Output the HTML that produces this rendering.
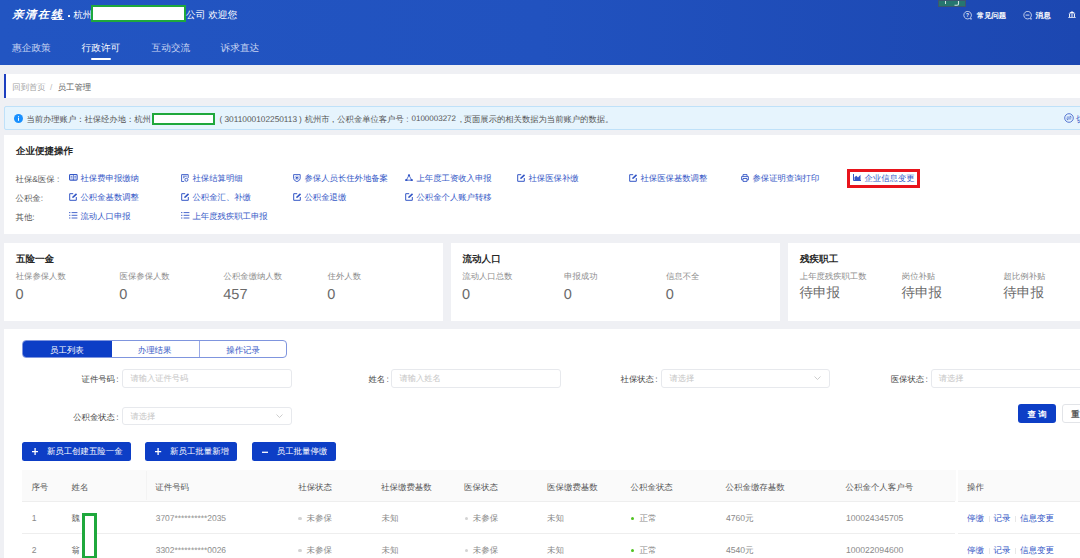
<!DOCTYPE html>
<html><head><meta charset="utf-8">
<style>
*{margin:0;padding:0;box-sizing:border-box}
html,body{width:1080px;height:558px;overflow:hidden;background:#eff0f4;font-family:"Liberation Sans",sans-serif;color:#333;position:relative}
.a{position:absolute;white-space:nowrap;line-height:1;text-rendering:geometricPrecision}
</style></head><body>
<div style="position:absolute;left:0px;top:0px;width:1080px;height:65px;background:linear-gradient(90deg,#2255c2 0%,#2152bf 50%,#1c47b1 100%)"></div>
<div class="a" style="left:12.3px;top:9.6px;font-size:11.2px;color:#fff;letter-spacing:1.6px;font-style:italic;font-weight:bold;transform:scaleY(0.97);transform-origin:0 0">亲清在线</div>
<div style="position:absolute;left:52px;top:18.6px;width:11.5px;height:1px;background:#fff;opacity:0.9"></div>
<div style="position:absolute;left:67.6px;top:15.2px;width:2px;height:2px;background:#fff;border-radius:0.5px"></div>
<div class="a" style="left:73.5px;top:10.6px;font-size:9.3px;color:#fff;">杭州</div>
<div style="position:absolute;left:91px;top:4.5px;width:95px;height:17.5px;border:2px solid #1fa83c;background:#fff;box-sizing:border-box"></div>
<div class="a" style="left:186.1px;top:11px;font-size:9.7px;color:#fff;">公司 欢迎您</div>
<div style="position:absolute;left:938.4px;top:0px;width:27.5px;height:6.8px;background:#26766f;border:1px solid #3d5570;box-sizing:border-box"></div>
<div style="position:absolute;left:944.5px;top:1px;width:1.2px;height:2.5px;background:#cfe3e0"></div>
<svg style="position:absolute;left:953px;top:0.5px" width="7" height="5" viewBox="0 0 7 5"><path d="M5.5 0 V3 Q5.5 4.2 4 4.2 H1.5" fill="none" stroke="#cfe3e0" stroke-width="1.1"/></svg>
<svg style="position:absolute;left:962.5px;top:10.8px" width="10" height="9" viewBox="0 0 10 9"><path d="M7.6 6.5 A3.8 3.8 0 1 0 6.4 7.5 L8.4 8.2 Z" fill="none" stroke="#fff" stroke-width="0.7" stroke-linejoin="round"/><text x="4.5" y="6" font-size="4.8" fill="#fff" text-anchor="middle" font-family="Liberation Sans" font-weight="bold">?</text></svg>
<div class="a" style="left:976.8px;top:12px;font-size:7.35px;color:#fff;font-weight:bold">常见问题</div>
<svg style="position:absolute;left:1022.5px;top:10.8px" width="10" height="9" viewBox="0 0 10 9"><path d="M7.6 6.5 A3.8 3.8 0 1 0 6.4 7.5 L8.4 8.2 Z" fill="none" stroke="#fff" stroke-width="0.7" stroke-linejoin="round"/><line x1="2.6" y1="4.1" x2="6.4" y2="4.1" stroke="#fff" stroke-width="0.8"/></svg>
<div class="a" style="left:1035.6px;top:12px;font-size:7.6px;color:#fff;font-weight:bold">消息</div>
<svg style="position:absolute;left:1067.8px;top:10.5px" width="8" height="7.2" viewBox="0 0 8 7.2"><path d="M0.3 2.4 L4 0.2 L7.7 2.4 Z M1.1 3 h1 v3 h-1z M3.5 3 h1 v3 h-1z M5.9 3 h1 v3 h-1z M0.3 6.3 h7.4 v0.9 h-7.4z" fill="#fff"/></svg>
<div class="a" style="left:12.0px;top:44px;font-size:9.7px;color:#c9d5f2;">惠企政策</div>
<div class="a" style="left:81.5px;top:44px;font-size:9.7px;color:#fff;">行政许可</div>
<div class="a" style="left:151.5px;top:44px;font-size:9.7px;color:#c9d5f2;">互动交流</div>
<div class="a" style="left:220.5px;top:44px;font-size:9.7px;color:#c9d5f2;">诉求直达</div>
<div style="position:absolute;left:91px;top:58px;width:20px;height:2px;background:#fff;border-radius:1px"></div>
<div style="position:absolute;left:4px;top:74px;width:1120px;height:24px;background:#fff;border-left:2.5px solid #1d3fc0;box-sizing:border-box"></div>
<div class="a" style="left:12.3px;top:82.7px;font-size:8.35px;color:#a3a3a3;">回到首页</div>
<div class="a" style="left:50.0px;top:82.7px;font-size:8.35px;color:#bbb;">/</div>
<div class="a" style="left:57.7px;top:82.7px;font-size:8.35px;color:#5c5c5c;">员工管理</div>
<div style="position:absolute;left:4px;top:106px;width:1120px;height:24px;background:#e6f4fd;border:1px solid #bfe1f9;border-radius:2px;box-sizing:border-box"></div>
<svg style="position:absolute;left:14px;top:114px" width="9" height="9" viewBox="0 0 9 9"><circle cx="4.5" cy="4.5" r="4.5" fill="#1890ff"/><rect x="4" y="3.8" width="1" height="3" fill="#fff"/><rect x="4" y="2.2" width="1" height="1" fill="#fff"/></svg>
<div class="a" style="left:26.4px;top:115.2px;font-size:8.3px;color:#555;">当前办理账户：社保经办地：杭州</div>
<div style="position:absolute;left:151.5px;top:112.5px;width:63.5px;height:12px;border:2px solid #1fa83c;background:#fff;box-sizing:border-box"></div>
<div class="a" style="left:219.5px;top:114.5px;font-size:8.3px;color:#555;">(</div>
<div class="a" style="left:224.5px;top:114.5px;font-size:8.3px;color:#555;">3011000102250113</div>
<div class="a" style="left:299.1px;top:114.5px;font-size:8.3px;color:#555;">)</div>
<div class="a" style="left:304.7px;top:115.2px;font-size:8.3px;color:#555;">杭州市</div>
<div class="a" style="left:332.0px;top:114.5px;font-size:8.3px;color:#555;">,</div>
<div class="a" style="left:337.3px;top:115.2px;font-size:8.3px;color:#555;">公积金单位客户号</div>
<div class="a" style="left:406.3px;top:114.5px;font-size:8.3px;color:#555;">:</div>
<div class="a" style="left:411.5px;top:114.5px;font-size:8.0px;color:#555;">0100003272</div>
<div class="a" style="left:459.8px;top:114.5px;font-size:8.3px;color:#555;">,</div>
<div class="a" style="left:463.7px;top:115.2px;font-size:8.32px;color:#555;">页面展示的相关数据为当前账户的数据。</div>
<svg style="position:absolute;left:1064.3px;top:113.3px" width="10" height="10" viewBox="0 0 10 10"><circle cx="5" cy="5" r="4.3" fill="none" stroke="#3457c6" stroke-width="0.8"/><path d="M2.7 4.1 h4.6 l-1.4 -1.3 M7.3 5.9 h-4.6 l1.4 1.3" fill="none" stroke="#3457c6" stroke-width="0.7"/></svg>
<div class="a" style="left:1076.1px;top:115.2px;font-size:8.3px;color:#3457c6;">切</div>
<div style="position:absolute;left:4px;top:135px;width:1120px;height:99px;background:#fff"></div>
<div class="a" style="left:15.9px;top:147px;font-size:9.5px;color:#262626;font-weight:bold">企业便捷操作</div>
<div class="a" style="left:15.5px;top:175px;font-size:8.4px;color:#5a5a5a;">社保&amp;医保</div>
<div class="a" style="left:57.0px;top:175px;font-size:8.4px;color:#5a5a5a;">:</div>
<div class="a" style="left:15.5px;top:194px;font-size:8.4px;color:#5a5a5a;">公积金:</div>
<div class="a" style="left:15.5px;top:213px;font-size:8.4px;color:#5a5a5a;">其他:</div>
<svg style="position:absolute;left:69px;top:174.2px" width="9" height="7" viewBox="0 0 9 7"><rect x="0.55" y="0.55" width="7.6" height="5.6" rx="0.9" fill="none" stroke="#3457c6" stroke-width="1.1"/><line x1="4.35" y1="0.5" x2="4.35" y2="6.2" stroke="#3457c6" stroke-width="0.8"/><path d="M1.6 2.3 h1.8 M1.6 3.9 h1.8 M5.3 2.3 h1.8 M5.3 3.9 h1.8" stroke="#3457c6" stroke-width="0.8"/></svg>
<div class="a" style="left:80.5px;top:174.1px;font-size:8.35px;color:#3457c6;">社保费申报缴纳</div>
<svg style="position:absolute;left:181px;top:173.6px" width="8" height="8.2" viewBox="0 0 8 8.2"><path d="M3.2 7.6 H0.6 V0.6 H7.2 V4" fill="none" stroke="#3457c6" stroke-width="0.9"/><path d="M2 2.2 h3.8 M2 3.7 h1.6" stroke="#3457c6" stroke-width="0.8"/><circle cx="5.4" cy="5.8" r="1.5" fill="none" stroke="#3457c6" stroke-width="0.9"/></svg>
<div class="a" style="left:192.5px;top:174.1px;font-size:8.35px;color:#3457c6;">社保结算明细</div>
<svg style="position:absolute;left:293px;top:173.5px" width="8" height="8.2" viewBox="0 0 8 8.2"><path d="M0.6 0.6 H7.2 V4.6 Q7.2 6.4 3.9 7.7 Q0.6 6.4 0.6 4.6 Z" fill="none" stroke="#3457c6" stroke-width="0.9" stroke-linejoin="round"/><circle cx="3.9" cy="3.8" r="1.9" fill="none" stroke="#3457c6" stroke-width="0.6" opacity="0.6"/><circle cx="3.9" cy="3.8" r="1.1" fill="#3457c6"/></svg>
<div class="a" style="left:304.5px;top:174.1px;font-size:8.35px;color:#3457c6;">参保人员长住外地备案</div>
<svg style="position:absolute;left:405px;top:173.89999999999998px" width="8" height="7.4" viewBox="0 0 8 7.4"><path d="M4 1.2 L1.3 6.2 H6.7 Z" fill="none" stroke="#3457c6" stroke-width="0.8"/><circle cx="4" cy="1.3" r="1.15" fill="#3457c6"/><circle cx="1.3" cy="6.1" r="1.2" fill="#3457c6"/><circle cx="6.7" cy="6.1" r="1.2" fill="#3457c6"/></svg>
<div class="a" style="left:416.5px;top:174.1px;font-size:8.35px;color:#3457c6;">上年度工资收入申报</div>
<svg style="position:absolute;left:517px;top:174.2px" width="9" height="8" viewBox="0 0 9 8"><path d="M4.2 0.7 H0.7 V7.3 H7.3 V4" fill="none" stroke="#3457c6" stroke-width="1"/><path d="M3.2 5 L3.5 3.6 L7 0.3 L8.1 1.4 L4.6 4.8 Z" fill="#3457c6"/></svg>
<div class="a" style="left:528.5px;top:174.1px;font-size:8.35px;color:#3457c6;">社保医保补缴</div>
<svg style="position:absolute;left:629px;top:174.2px" width="9" height="8" viewBox="0 0 9 8"><path d="M4.2 0.7 H0.7 V7.3 H7.3 V4" fill="none" stroke="#3457c6" stroke-width="1"/><path d="M3.2 5 L3.5 3.6 L7 0.3 L8.1 1.4 L4.6 4.8 Z" fill="#3457c6"/></svg>
<div class="a" style="left:640.5px;top:174.1px;font-size:8.35px;color:#3457c6;">社保医保基数调整</div>
<svg style="position:absolute;left:741px;top:173.7px" width="8" height="8" viewBox="0 0 8 8"><path d="M2 2.4 V0.6 H6 V2.4" fill="none" stroke="#3457c6" stroke-width="0.9"/><path d="M2 5.9 H0.6 V2.6 H7.4 V5.9 H6" fill="none" stroke="#3457c6" stroke-width="0.9" stroke-linejoin="round"/><path d="M2 4.5 H6 V7.4 H2 Z" fill="none" stroke="#3457c6" stroke-width="0.9"/></svg>
<div class="a" style="left:752.5px;top:174.1px;font-size:8.35px;color:#3457c6;">参保证明查询打印</div>
<svg style="position:absolute;left:853px;top:174.2px" width="8" height="7" viewBox="0 0 8 7"><path d="M0.5 0 V6.5 H8" fill="none" stroke="#3457c6" stroke-width="1"/><path d="M1.5 6 V3.2 L3.3 1.8 L5 3.6 L7.5 0.8 V6 Z" fill="#3457c6"/></svg>
<div class="a" style="left:864.5px;top:174.1px;font-size:8.35px;color:#3457c6;">企业信息变更</div>
<svg style="position:absolute;left:69px;top:193.2px" width="9" height="8" viewBox="0 0 9 8"><path d="M4.2 0.7 H0.7 V7.3 H7.3 V4" fill="none" stroke="#3457c6" stroke-width="1"/><path d="M3.2 5 L3.5 3.6 L7 0.3 L8.1 1.4 L4.6 4.8 Z" fill="#3457c6"/></svg>
<div class="a" style="left:80.5px;top:193.1px;font-size:8.35px;color:#3457c6;">公积金基数调整</div>
<svg style="position:absolute;left:181px;top:193.2px" width="9" height="8" viewBox="0 0 9 8"><path d="M4.2 0.7 H0.7 V7.3 H7.3 V4" fill="none" stroke="#3457c6" stroke-width="1"/><path d="M3.2 5 L3.5 3.6 L7 0.3 L8.1 1.4 L4.6 4.8 Z" fill="#3457c6"/></svg>
<div class="a" style="left:192.5px;top:193.1px;font-size:8.35px;color:#3457c6;">公积金汇、补缴</div>
<svg style="position:absolute;left:293px;top:193.2px" width="9" height="8" viewBox="0 0 9 8"><path d="M4.2 0.7 H0.7 V7.3 H7.3 V4" fill="none" stroke="#3457c6" stroke-width="1"/><path d="M3.2 5 L3.5 3.6 L7 0.3 L8.1 1.4 L4.6 4.8 Z" fill="#3457c6"/></svg>
<div class="a" style="left:304.5px;top:193.1px;font-size:8.35px;color:#3457c6;">公积金退缴</div>
<svg style="position:absolute;left:405px;top:193.2px" width="9" height="8" viewBox="0 0 9 8"><path d="M4.2 0.7 H0.7 V7.3 H7.3 V4" fill="none" stroke="#3457c6" stroke-width="1"/><path d="M3.2 5 L3.5 3.6 L7 0.3 L8.1 1.4 L4.6 4.8 Z" fill="#3457c6"/></svg>
<div class="a" style="left:416.5px;top:193.1px;font-size:8.35px;color:#3457c6;">公积金个人账户转移</div>
<svg style="position:absolute;left:69px;top:212.2px" width="9" height="7" viewBox="0 0 9 7"><path d="M0 0.6 h1.4 M2.6 0.6 h5.8 M0 3.3 h1.4 M2.6 3.3 h5.8 M0 6 h1.4 M2.6 6 h5.8" fill="none" stroke="#3457c6" stroke-width="0.9"/></svg>
<div class="a" style="left:80.5px;top:212.1px;font-size:8.35px;color:#3457c6;">流动人口申报</div>
<svg style="position:absolute;left:181px;top:212.2px" width="9" height="7" viewBox="0 0 9 7"><path d="M0 0.6 h1.4 M2.6 0.6 h5.8 M0 3.3 h1.4 M2.6 3.3 h5.8 M0 6 h1.4 M2.6 6 h5.8" fill="none" stroke="#3457c6" stroke-width="0.9"/></svg>
<div class="a" style="left:192.5px;top:212.1px;font-size:8.35px;color:#3457c6;">上年度残疾职工申报</div>
<div style="position:absolute;left:847.2px;top:169px;width:73px;height:18.8px;border:3px solid #e8141c;box-sizing:border-box"></div>
<div style="position:absolute;left:4px;top:243px;width:439px;height:78px;background:#fff"></div>
<div style="position:absolute;left:451px;top:243px;width:329px;height:78px;background:#fff"></div>
<div style="position:absolute;left:788px;top:243px;width:330px;height:78px;background:#fff"></div>
<div class="a" style="left:15.9px;top:255px;font-size:9.55px;color:#262626;font-weight:bold">五险一金</div>
<div class="a" style="left:15.7px;top:272.4px;font-size:8.36px;color:#8c8c8c;">社保参保人数</div>
<div class="a" style="left:15.4px;top:287.6px;font-size:14.5px;color:#6a6a6a;">0</div>
<div class="a" style="left:119.6px;top:272.4px;font-size:8.36px;color:#8c8c8c;">医保参保人数</div>
<div class="a" style="left:119.3px;top:287.6px;font-size:14.5px;color:#6a6a6a;">0</div>
<div class="a" style="left:223.6px;top:272.4px;font-size:8.36px;color:#8c8c8c;">公积金缴纳人数</div>
<div class="a" style="left:223.3px;top:287.6px;font-size:14.5px;color:#6a6a6a;">457</div>
<div class="a" style="left:327.6px;top:272.4px;font-size:8.36px;color:#8c8c8c;">住外人数</div>
<div class="a" style="left:327.3px;top:287.6px;font-size:14.5px;color:#6a6a6a;">0</div>
<div class="a" style="left:462.5px;top:255px;font-size:9.55px;color:#262626;font-weight:bold">流动人口</div>
<div class="a" style="left:462.3px;top:272.4px;font-size:8.36px;color:#8c8c8c;">流动人口总数</div>
<div class="a" style="left:462.0px;top:287.6px;font-size:14.5px;color:#6a6a6a;">0</div>
<div class="a" style="left:564.1px;top:272.4px;font-size:8.36px;color:#8c8c8c;">申报成功</div>
<div class="a" style="left:563.8px;top:287.6px;font-size:14.5px;color:#6a6a6a;">0</div>
<div class="a" style="left:666.0px;top:272.4px;font-size:8.36px;color:#8c8c8c;">信息不全</div>
<div class="a" style="left:665.7px;top:287.6px;font-size:14.5px;color:#6a6a6a;">0</div>
<div class="a" style="left:800.0px;top:255px;font-size:9.55px;color:#262626;font-weight:bold">残疾职工</div>
<div class="a" style="left:799.8px;top:272.4px;font-size:8.36px;color:#8c8c8c;">上年度残疾职工数</div>
<div class="a" style="left:799.4px;top:286.4px;font-size:13.6px;color:#6a6a6a;">待申报</div>
<div class="a" style="left:901.8px;top:272.4px;font-size:8.36px;color:#8c8c8c;">岗位补贴</div>
<div class="a" style="left:901.4px;top:286.4px;font-size:13.6px;color:#6a6a6a;">待申报</div>
<div class="a" style="left:1003.6px;top:272.4px;font-size:8.36px;color:#8c8c8c;">超比例补贴</div>
<div class="a" style="left:1003.2px;top:286.4px;font-size:13.6px;color:#6a6a6a;">待申报</div>
<div style="position:absolute;left:4px;top:329px;width:1120px;height:229px;background:#fff"></div>
<div style="position:absolute;left:22px;top:340.3px;width:265px;height:17.3px;border:1px solid #7f95de;border-radius:4px;overflow:hidden;background:#fff;box-sizing:border-box"><div style="position:absolute;left:-1px;top:-1px;width:89.6px;height:17.3px;background:#0d3ec6"></div><div style="position:absolute;left:176px;top:0;width:1px;height:16px;background:#9aaae6"></div></div>
<div class="a" style="left:50.0px;top:345.6px;font-size:8.45px;color:#fff;">员工列表</div>
<div class="a" style="left:137.7px;top:345.6px;font-size:8.45px;color:#3457c6;">办理结果</div>
<div class="a" style="left:226.2px;top:345.6px;font-size:8.45px;color:#3457c6;">操作记录</div>
<div class="a" style="left:81.56px;top:375px;font-size:8.36px;color:#474747;">证件号码</div>
<div class="a" style="left:116.3px;top:375px;font-size:8.36px;color:#474747;">:</div>
<div style="position:absolute;left:122.4px;top:369.2px;width:169.6px;height:18.5px;background:#fff;border:1px solid #e7e9ed;border-radius:3px;box-sizing:border-box"></div>
<div class="a" style="left:130.4px;top:375.2px;font-size:8.25px;color:#c6c6c6;">请输入证件号码</div>
<div class="a" style="left:368.38px;top:375px;font-size:8.36px;color:#474747;">姓名</div>
<div class="a" style="left:386.4px;top:375px;font-size:8.36px;color:#474747;">:</div>
<div style="position:absolute;left:391.4px;top:369.2px;width:169.6px;height:18.5px;background:#fff;border:1px solid #e7e9ed;border-radius:3px;box-sizing:border-box"></div>
<div class="a" style="left:399.4px;top:375.2px;font-size:8.25px;color:#c6c6c6;">请输入姓名</div>
<div class="a" style="left:620.56px;top:375px;font-size:8.36px;color:#474747;">社保状态</div>
<div class="a" style="left:655.3px;top:375px;font-size:8.36px;color:#474747;">:</div>
<div style="position:absolute;left:661.4px;top:369.2px;width:168.6px;height:18.5px;background:#fff;border:1px solid #e7e9ed;border-radius:3px;box-sizing:border-box"></div>
<div class="a" style="left:669.4px;top:375.2px;font-size:8.25px;color:#c6c6c6;">请选择</div>
<svg style="position:absolute;left:814px;top:376.4px" width="7" height="4" viewBox="0 0 7 4"><path d="M0.5 0.5 L3.5 3.5 L6.5 0.5" fill="none" stroke="#c0c0c0" stroke-width="0.8"/></svg>
<div class="a" style="left:890.76px;top:375px;font-size:8.36px;color:#474747;">医保状态</div>
<div class="a" style="left:925.5px;top:375px;font-size:8.36px;color:#474747;">:</div>
<div style="position:absolute;left:930.8px;top:369.2px;width:169.6px;height:18.5px;background:#fff;border:1px solid #e7e9ed;border-radius:3px;box-sizing:border-box"></div>
<div class="a" style="left:938.8px;top:375.2px;font-size:8.25px;color:#c6c6c6;">请选择</div>
<div class="a" style="left:73.2px;top:413px;font-size:8.36px;color:#474747;">公积金状态</div>
<div class="a" style="left:116.3px;top:413px;font-size:8.36px;color:#474747;">:</div>
<div style="position:absolute;left:122.4px;top:406.5px;width:169.6px;height:18.5px;background:#fff;border:1px solid #e7e9ed;border-radius:3px;box-sizing:border-box"></div>
<div class="a" style="left:130.4px;top:412.5px;font-size:8.25px;color:#c6c6c6;">请选择</div>
<svg style="position:absolute;left:276px;top:413.7px" width="7" height="4" viewBox="0 0 7 4"><path d="M0.5 0.5 L3.5 3.5 L6.5 0.5" fill="none" stroke="#c0c0c0" stroke-width="0.8"/></svg>
<div style="position:absolute;left:1018px;top:404.2px;width:37.7px;height:18.8px;background:#0d3ec6;border-radius:3px"></div>
<div class="a" style="left:1027.5px;top:410px;font-size:8.4px;color:#fff;font-weight:bold">查 询</div>
<div style="position:absolute;left:1061.8px;top:404.2px;width:38px;height:18.8px;background:#fff;border:1px solid #e2e4e8;border-radius:3px;box-sizing:border-box"></div>
<div class="a" style="left:1071.3px;top:410px;font-size:8.4px;color:#555;font-weight:bold">重</div>
<div style="position:absolute;left:21.8px;top:442px;width:109.2px;height:18.8px;background:#0d3ec6;border-radius:2.5px"></div>
<svg style="position:absolute;left:32.2px;top:448.3px" width="6.2" height="7" viewBox="0 0 6.2 7"><path d="M3.1 0 V7 M0 3.6 H6.2" stroke="#fff" stroke-width="1.3"/></svg>
<div class="a" style="left:46.9px;top:447.4px;font-size:8.42px;color:#fff;">新员工创建五险一金</div>
<div style="position:absolute;left:145px;top:442px;width:92.3px;height:18.8px;background:#0d3ec6;border-radius:2.5px"></div>
<svg style="position:absolute;left:155.4px;top:448.3px" width="6.2" height="7" viewBox="0 0 6.2 7"><path d="M3.1 0 V7 M0 3.6 H6.2" stroke="#fff" stroke-width="1.3"/></svg>
<div class="a" style="left:170.1px;top:447.4px;font-size:8.42px;color:#fff;">新员工批量新增</div>
<div style="position:absolute;left:251.7px;top:442px;width:84px;height:18.8px;background:#0d3ec6;border-radius:2.5px"></div>
<svg style="position:absolute;left:262.09999999999997px;top:448.6px" width="6.2" height="6.6" viewBox="0 0 6.2 6.6"><path d="M0 3.3 H6.2" stroke="#fff" stroke-width="1.3"/></svg>
<div class="a" style="left:276.8px;top:447.4px;font-size:8.42px;color:#fff;">员工批量停缴</div>
<div style="position:absolute;left:22px;top:470px;width:1100px;height:31px;background:#fafafa"></div>
<div style="position:absolute;left:22px;top:501px;width:933px;height:1px;background:#eeeeee"></div>
<div style="position:absolute;left:22px;top:533px;width:933px;height:1px;background:#eeeeee"></div>
<div style="position:absolute;left:958px;top:501px;width:160px;height:1px;background:#eeeeee"></div>
<div style="position:absolute;left:958px;top:533px;width:160px;height:1px;background:#eeeeee"></div>
<div style="position:absolute;left:955.5px;top:470px;width:2.5px;height:31px;background:#fff"></div>
<div style="position:absolute;left:145.5px;top:471px;width:1px;height:29px;background:#f3f3f3"></div>
<div class="a" style="left:31.4px;top:482.5px;font-size:8.45px;color:#555;">序号</div>
<div class="a" style="left:71.6px;top:482.5px;font-size:8.45px;color:#555;">姓名</div>
<div class="a" style="left:155.3px;top:482.5px;font-size:8.45px;color:#555;">证件号码</div>
<div class="a" style="left:298.2px;top:482.5px;font-size:8.45px;color:#555;">社保状态</div>
<div class="a" style="left:381.1px;top:482.5px;font-size:8.45px;color:#555;">社保缴费基数</div>
<div class="a" style="left:464.1px;top:482.5px;font-size:8.45px;color:#555;">医保状态</div>
<div class="a" style="left:547.1px;top:482.5px;font-size:8.45px;color:#555;">医保缴费基数</div>
<div class="a" style="left:630.6px;top:482.5px;font-size:8.45px;color:#555;">公积金状态</div>
<div class="a" style="left:725.6px;top:482.5px;font-size:8.45px;color:#555;">公积金缴存基数</div>
<div class="a" style="left:845.6px;top:482.5px;font-size:8.45px;color:#555;">公积金个人客户号</div>
<div class="a" style="left:967.1px;top:482.5px;font-size:8.45px;color:#555;">操作</div>
<div class="a" style="left:31.7px;top:514.0px;font-size:8.6px;color:#8a8a8a;">1</div>
<div class="a" style="left:71.6px;top:514.0px;font-size:8.5px;color:#666;">魏</div>
<div class="a" style="left:155.7px;top:514.0px;font-size:8.45px;color:#8a8a8a;">3707**********2035</div>
<div style="position:absolute;left:298.3px;top:516.9px;width:3.5px;height:3.5px;border-radius:50%;background:#d3d3d3"></div>
<div class="a" style="left:306.5px;top:514.0px;font-size:8.5px;color:#8a8a8a;">未参保</div>
<div style="position:absolute;left:464.5px;top:516.9px;width:3.5px;height:3.5px;border-radius:50%;background:#d3d3d3"></div>
<div class="a" style="left:472.7px;top:514.0px;font-size:8.5px;color:#8a8a8a;">未参保</div>
<div class="a" style="left:381.4px;top:514.0px;font-size:8.5px;color:#8a8a8a;">未知</div>
<div class="a" style="left:547.1px;top:514.0px;font-size:8.5px;color:#8a8a8a;">未知</div>
<div style="position:absolute;left:630.6px;top:516.5px;width:3.9px;height:3.9px;border-radius:50%;background:#4fc21f"></div>
<div class="a" style="left:639.6px;top:514.0px;font-size:8.5px;color:#8a8a8a;">正常</div>
<div class="a" style="left:725.9px;top:514.0px;font-size:8.6px;color:#8a8a8a;">4760元</div>
<div class="a" style="left:845.9px;top:514.0px;font-size:8.6px;color:#8a8a8a;">100024345705</div>
<div class="a" style="left:967.1px;top:514.0px;font-size:8.5px;color:#3457c6;">停缴</div>
<div style="position:absolute;left:989px;top:515.5px;width:1px;height:6px;background:#e8e8e8"></div>
<div class="a" style="left:993.6px;top:514.0px;font-size:8.5px;color:#3457c6;">记录</div>
<div style="position:absolute;left:1015px;top:515.5px;width:1px;height:6px;background:#e8e8e8"></div>
<div class="a" style="left:1020.1px;top:514.0px;font-size:8.5px;color:#3457c6;">信息变更</div>
<div class="a" style="left:31.7px;top:546.0px;font-size:8.6px;color:#8a8a8a;">2</div>
<div class="a" style="left:71.6px;top:546.0px;font-size:8.5px;color:#666;">翁</div>
<div class="a" style="left:155.7px;top:546.0px;font-size:8.45px;color:#8a8a8a;">3302**********0026</div>
<div style="position:absolute;left:298.3px;top:548.9px;width:3.5px;height:3.5px;border-radius:50%;background:#d3d3d3"></div>
<div class="a" style="left:306.5px;top:546.0px;font-size:8.5px;color:#8a8a8a;">未参保</div>
<div style="position:absolute;left:464.5px;top:548.9px;width:3.5px;height:3.5px;border-radius:50%;background:#d3d3d3"></div>
<div class="a" style="left:472.7px;top:546.0px;font-size:8.5px;color:#8a8a8a;">未参保</div>
<div class="a" style="left:381.4px;top:546.0px;font-size:8.5px;color:#8a8a8a;">未知</div>
<div class="a" style="left:547.1px;top:546.0px;font-size:8.5px;color:#8a8a8a;">未知</div>
<div style="position:absolute;left:630.6px;top:548.5px;width:3.9px;height:3.9px;border-radius:50%;background:#4fc21f"></div>
<div class="a" style="left:639.6px;top:546.0px;font-size:8.5px;color:#8a8a8a;">正常</div>
<div class="a" style="left:725.9px;top:546.0px;font-size:8.6px;color:#8a8a8a;">4540元</div>
<div class="a" style="left:845.9px;top:546.0px;font-size:8.6px;color:#8a8a8a;">100022094600</div>
<div class="a" style="left:967.1px;top:546.0px;font-size:8.5px;color:#3457c6;">停缴</div>
<div style="position:absolute;left:989px;top:547.5px;width:1px;height:6px;background:#e8e8e8"></div>
<div class="a" style="left:993.6px;top:546.0px;font-size:8.5px;color:#3457c6;">记录</div>
<div style="position:absolute;left:1015px;top:547.5px;width:1px;height:6px;background:#e8e8e8"></div>
<div class="a" style="left:1020.1px;top:546.0px;font-size:8.5px;color:#3457c6;">信息变更</div>
<div style="position:absolute;left:82px;top:512.5px;width:15px;height:46px;border:3px solid #1fa83c;background:#fff;box-sizing:border-box"></div>
</body></html>
